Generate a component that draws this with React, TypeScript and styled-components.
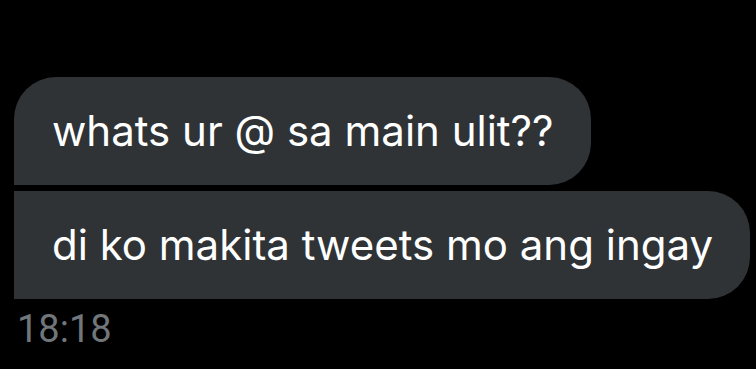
import React from "react";
import styled, { createGlobalStyle } from "styled-components";

const GlobalStyle = createGlobalStyle`
  html, body {
    margin: 0;
    padding: 0;
    background: #000;
  }
  body {
    font-family: Inter, Roboto, "Liberation Sans", sans-serif;
  }
`;

const Thread = styled.div`
  display: flex;
  flex-direction: column;
  align-items: flex-start;
  gap: 6px;
  padding: 77px 0 0 14px;
`;

const Bubble = styled.div<{ $first?: boolean }>`
  background: #2f3336;
  color: #ffffff;
  font-size: 42px;
  line-height: 48px;
  padding: 30px 37px 30px 38px;
  border-radius: ${(p) => (p.$first ? "42px 42px 42px 0" : "0 42px 42px 0")};
  white-space: nowrap;
`;

const Time = styled.div`
  font-family: Roboto, "Liberation Sans", sans-serif;
  color: #71767b;
  font-size: 38px;
  line-height: 44px;
  margin-top: 2px;
  padding-left: 3px;
`;

const messages = ["whats ur @ sa main ulit??", "di ko makita tweets mo ang ingay"];

const App: React.FC = () => {
  return (
    <>
      <GlobalStyle />
      <Thread>
        {messages.map((m, i) => (
          <Bubble key={i} $first={i === 0}>
            {m}
          </Bubble>
        ))}
        <Time>18:18</Time>
      </Thread>
    </>
  );
};

export default App;
